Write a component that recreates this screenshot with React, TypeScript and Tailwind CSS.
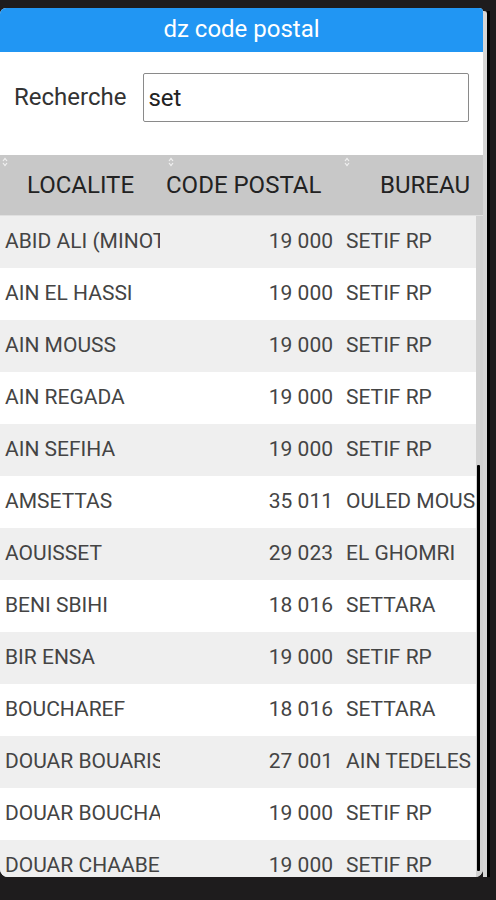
const ROWS: [string, string, string][] = [
  ["ABID ALI (MINOTERIE)", "19 000", "SETIF RP"],
  ["AIN EL HASSI", "19 000", "SETIF RP"],
  ["AIN MOUSS", "19 000", "SETIF RP"],
  ["AIN REGADA", "19 000", "SETIF RP"],
  ["AIN SEFIHA", "19 000", "SETIF RP"],
  ["AMSETTAS", "35 011", "OULED MOUSSA"],
  ["AOUISSET", "29 023", "EL GHOMRI"],
  ["BENI SBIHI", "18 016", "SETTARA"],
  ["BIR ENSA", "19 000", "SETIF RP"],
  ["BOUCHAREF", "18 016", "SETTARA"],
  ["DOUAR BOUARIS", "27 001", "AIN TEDELES"],
  ["DOUAR BOUCHAREF", "19 000", "SETIF RP"],
  ["DOUAR CHAABET", "19 000", "SETIF RP"],
];

function SortIcon() {
  return (
    <svg width="6" height="10" viewBox="0 0 6 10" className="absolute top-[2px]">
      <path d="M1 4 L3 1.5 L5 4" fill="none" stroke="#f2f2f2" strokeWidth="1.2" />
      <path d="M1 6 L3 8.5 L5 6" fill="none" stroke="#f2f2f2" strokeWidth="1.2" />
    </svg>
  );
}

export default function App() {
  return (
    <div className="h-[900px] w-[496px] bg-[#1e1c1d] pt-[8px] overflow-hidden font-['Roboto',sans-serif]">
      <div className="flex h-[869px] w-[490px]">
        {/* Panel */}
        <div className="w-[483px] h-full bg-white flex flex-col rounded-tl-[6px] rounded-tr-[4px] rounded-b-[8px] overflow-hidden">
          {/* Title bar */}
          <div className="h-[44px] shrink-0 bg-[#2196f3] text-white text-[24px] flex items-center justify-center pb-[3px]">
            dz code postal
          </div>

          {/* Search */}
          <div className="h-[103px] shrink-0 flex items-start pt-[21px] pl-[14px] pr-[14px] gap-[17px]">
            <span className="text-[24px] text-[#333] leading-[49px]">Recherche</span>
            <div className="flex-1 h-[49px] border border-[#8a8a8a] rounded-[2px] flex items-center px-[4px] text-[24px] text-[#222]">
              set
            </div>
          </div>

          {/* Table header */}
          <div className="h-[61px] shrink-0 bg-[#c8c8c8] flex text-[24px] text-[#222] border-b border-[#e0e0e0] overflow-hidden">
            <div className="relative w-[166px] shrink-0 flex items-center pl-[27px] whitespace-nowrap">
              <span className="left-[2px] absolute top-0"><SortIcon /></span>
              LOCALITE
            </div>
            <div className="relative w-[176px] shrink-0 flex items-center whitespace-nowrap">
              <span className="left-[2px] absolute top-0"><SortIcon /></span>
              CODE POSTAL
            </div>
            <div className="relative flex-1 min-w-0 flex items-center justify-end pr-[13px] whitespace-nowrap">
              <span className="left-[2px] absolute top-0"><SortIcon /></span>
              BUREAU
            </div>
          </div>

          {/* Body */}
          <div className="flex-1 min-h-0 flex overflow-hidden">
            <div className="flex-1 min-w-0 flex flex-col">
              {ROWS.map(([loc, code, bureau], i) => (
                <div
                  key={loc}
                  className={`h-[52px] shrink-0 flex items-center text-[21px] text-[#444] ${i % 2 === 0 ? "bg-[#efefef]" : "bg-white"}`}
                >
                  <div className="w-[160px] shrink-0 pl-[5px] overflow-hidden whitespace-nowrap">{loc}</div>
                  <div className="w-[173px] shrink-0 text-right whitespace-nowrap">{code}</div>
                  <div className="flex-1 min-w-0 pl-[13px] overflow-hidden whitespace-nowrap">{bureau}</div>
                </div>
              ))}
            </div>
            {/* Scrollbar */}
            <div className="w-[7px] shrink-0 bg-[#d2d2d2] flex flex-col">
              <div className="h-[249px] shrink-0" />
              <div className="w-[3px] ml-[1px] flex-1 mb-[6px] bg-black rounded-[1px]" />
            </div>
          </div>
        </div>
        {/* Frame edge */}
        <div className="w-[4px] mt-[3px] bg-[#d6d6d6] rounded-tr-[3px]" />
        <div className="w-[3px] mt-[3px] bg-black" />
      </div>
    </div>
  );
}
